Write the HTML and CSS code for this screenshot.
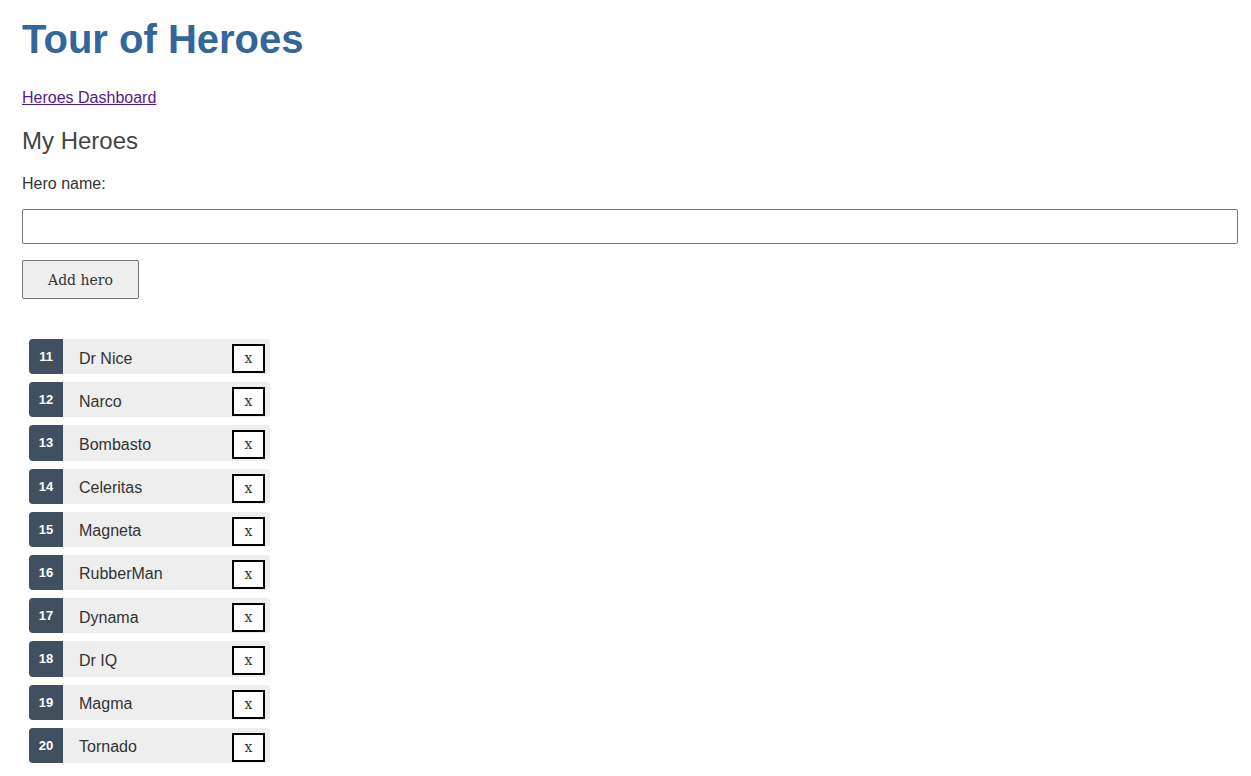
FILE: index.html
```html
<!DOCTYPE html>
<html lang="en">
<head>
<meta charset="utf-8">
<title>Tour of Heroes</title>
<link rel="stylesheet" href="styles.css">
</head>
<body>
<h1 class="title">Tour of Heroes</h1>
<nav class="nav"><a class="nav-link" href="#dashboard">Heroes Dashboard</a></nav>
<h2 class="subtitle">My Heroes</h2>
<div class="add-form">
  <label class="field-label" for="new-hero">Hero name: </label>
  <input class="field-input" id="new-hero" type="text">
  <button class="add-button" type="button">Add hero</button>
</div>
<ul class="heroes">
  <li class="hero"><span class="badge">11</span><span class="name">Dr Nice</span><button class="delete" type="button">x</button></li>
  <li class="hero"><span class="badge">12</span><span class="name">Narco</span><button class="delete" type="button">x</button></li>
  <li class="hero"><span class="badge">13</span><span class="name">Bombasto</span><button class="delete" type="button">x</button></li>
  <li class="hero"><span class="badge">14</span><span class="name">Celeritas</span><button class="delete" type="button">x</button></li>
  <li class="hero"><span class="badge">15</span><span class="name">Magneta</span><button class="delete" type="button">x</button></li>
  <li class="hero"><span class="badge">16</span><span class="name">RubberMan</span><button class="delete" type="button">x</button></li>
  <li class="hero"><span class="badge">17</span><span class="name">Dynama</span><button class="delete" type="button">x</button></li>
  <li class="hero"><span class="badge">18</span><span class="name">Dr IQ</span><button class="delete" type="button">x</button></li>
  <li class="hero"><span class="badge">19</span><span class="name">Magma</span><button class="delete" type="button">x</button></li>
  <li class="hero"><span class="badge">20</span><span class="name">Tornado</span><button class="delete" type="button">x</button></li>
</ul>
</body>
</html>
```
FILE: styles.css
```css
html, body {
  margin: 0;
  background: #fff;
}
body {
  padding: 17px 13px 0 22px;
  font-family: "Liberation Sans", Arial, sans-serif;
  color: #333;
  font-size: 16px;
}
.title {
  margin: 0;
  color: #369;
  font-family: "Liberation Sans", Arial, sans-serif;
  font-size: 40px;
  font-weight: bold;
  line-height: normal;
}
.nav {
  margin-top: 26.5px;
  line-height: normal;
}
.nav-link {
  color: #551a8b;
  font-size: 16px;
}
.subtitle {
  margin: 20.5px 0 0;
  color: #444;
  font-size: 24px;
  font-weight: normal;
  line-height: normal;
}
.add-form {
  display: flex;
  flex-direction: column;
  align-items: flex-start;
}
.field-label {
  margin-top: 20px;
  line-height: normal;
  color: #333;
}
.field-input {
  box-sizing: border-box;
  margin: 16px 0 0;
  width: 100%;
  height: 35px;
  border: 1px solid #767676;
  border-radius: 2px;
  padding: 1px 2px;
  font-size: 16px;
}
.add-button {
  box-sizing: border-box;
  margin-top: 16px;
  width: 117px;
  height: 39px;
  border: 1px solid #767676;
  border-radius: 2px;
  background: #efefef;
  color: #333;
  font-family: "DejaVu Serif", Georgia, serif;
  font-size: 14px;
  padding: 0;
}
.heroes {
  list-style: none;
  margin: 40px 0 0 7px;
  padding: 0;
  display: flex;
  flex-direction: column;
  gap: 8px;
  width: 241px;
}
.hero {
  display: flex;
  align-items: flex-start;
  height: 35.2px;
  background: #eee;
  border-radius: 4px;
}
.badge {
  align-self: stretch;
  width: 34px;
  display: flex;
  align-items: center;
  justify-content: center;
  background: #405061;
  color: #fff;
  font-size: 13px;
  font-weight: bold;
  border-radius: 4px 0 0 4px;
}
.name {
  flex: 1;
  margin-left: 16px;
  padding-top: 10.5px;
  line-height: normal;
  color: #333;
}
.delete {
  box-sizing: border-box;
  margin: 5px 5px 0 0;
  width: 33px;
  height: 29px;
  padding: 0 0 1px;
  border: 2px solid #000;
  background: #fff;
  color: #333;
  font-family: "DejaVu Serif", Georgia, serif;
  font-size: 14px;
}
```
